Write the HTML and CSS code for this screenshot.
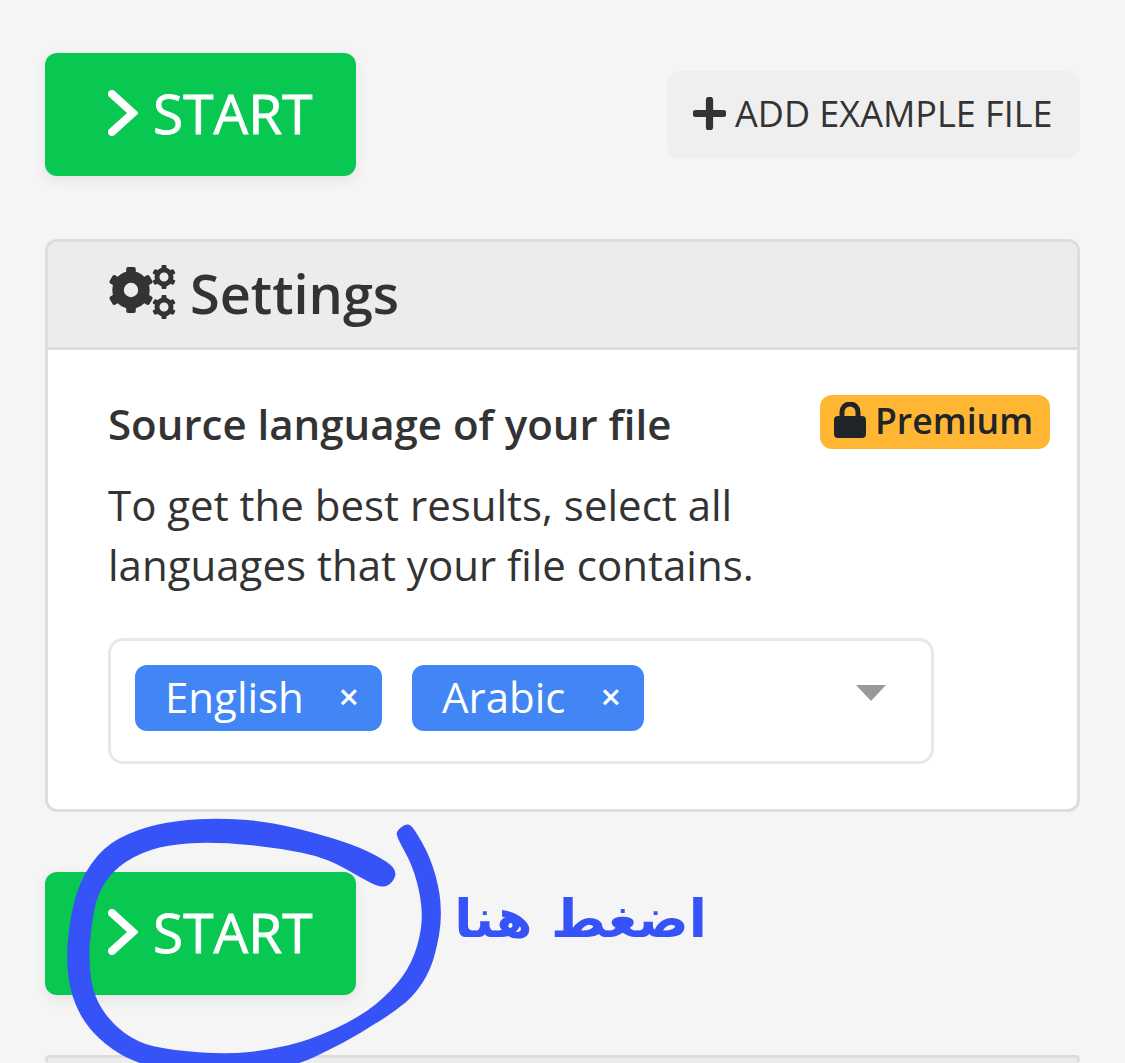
FILE: index.html
```html
<!DOCTYPE html>
<html lang="en">
<head>
    <meta charset="UTF-8">
    <meta name="viewport" content="width=device-width, initial-scale=1.0">
    <title>Start</title>
    <link rel="stylesheet" href="styles.css">
</head>
<body>

<svg class="defs" width="0" height="0">
    <symbol id="gear" viewBox="-24 -24 48 48">
        <circle r="13.5" fill="none" stroke="currentColor" stroke-width="12"/>
        <g fill="currentColor">
            <rect x="-5" y="-24" width="10" height="9" rx="2"/>
            <rect x="-5" y="-24" width="10" height="9" rx="2" transform="rotate(60)"/>
            <rect x="-5" y="-24" width="10" height="9" rx="2" transform="rotate(120)"/>
            <rect x="-5" y="-24" width="10" height="9" rx="2" transform="rotate(180)"/>
            <rect x="-5" y="-24" width="10" height="9" rx="2" transform="rotate(240)"/>
            <rect x="-5" y="-24" width="10" height="9" rx="2" transform="rotate(300)"/>
        </g>
    </symbol>
    <symbol id="gear-small" viewBox="-24 -24 48 48">
        <circle r="14" fill="none" stroke="currentColor" stroke-width="10"/>
        <g fill="currentColor">
            <rect x="-5" y="-24" width="10" height="9" rx="2"/>
            <rect x="-5" y="-24" width="10" height="9" rx="2" transform="rotate(60)"/>
            <rect x="-5" y="-24" width="10" height="9" rx="2" transform="rotate(120)"/>
            <rect x="-5" y="-24" width="10" height="9" rx="2" transform="rotate(180)"/>
            <rect x="-5" y="-24" width="10" height="9" rx="2" transform="rotate(240)"/>
            <rect x="-5" y="-24" width="10" height="9" rx="2" transform="rotate(300)"/>
        </g>
    </symbol>
    <symbol id="chevron" viewBox="0 0 30 46">
        <path d="M4 4 L25 23 L4 42" fill="none" stroke="currentColor" stroke-width="8" stroke-linecap="round" stroke-linejoin="miter"/>
    </symbol>
</svg>

<div class="page">
    <div class="top-row">
        <button class="btn-start">
            <svg class="chevron"><use href="#chevron"/></svg>
            <span>START</span>
        </button>
        <button class="btn-example">
            <svg class="plus" viewBox="0 0 32 32"><path d="M16 3 V29 M3 16 H29" fill="none" stroke="currentColor" stroke-width="7" stroke-linecap="round"/></svg>
            <span>ADD EXAMPLE FILE</span>
        </button>
    </div>

    <div class="card">
        <div class="card-header">
            <svg class="cogs" viewBox="0 0 68 54">
                <use href="#gear" x="0" y="2" width="46" height="46"/>
                <use href="#gear-small" x="44" y="0" width="24" height="24"/>
                <use href="#gear-small" x="44" y="30" width="24" height="24"/>
            </svg>
            <h2>Settings</h2>
        </div>
        <div class="card-body">
            <div class="label-row">
                <label>Source language of your file</label>
                <span class="badge">
                    <svg class="lock" viewBox="0 0 32 36">
                        <path d="M8 16 V10 A8 8 0 0 1 24 10 V16" fill="none" stroke="currentColor" stroke-width="5"/>
                        <rect x="0" y="14" width="32" height="22" rx="4" fill="currentColor"/>
                    </svg>
                    Premium
                </span>
            </div>
            <p class="hint">To get the best results, select all<br>languages that your file contains.</p>
            <div class="select-box">
                <span class="tag">English <span class="tag-x">×</span></span>
                <span class="tag tag-arabic">Arabic <span class="tag-x">×</span></span>
                <span class="caret"></span>
            </div>
        </div>
    </div>

    <div class="bottom-row">
        <button class="btn-start">
            <svg class="chevron"><use href="#chevron"/></svg>
            <span>START</span>
        </button>
    </div>

    <div class="card card-next"></div>
</div>

<!-- hand drawn note on top of the page -->
<svg class="scribble" viewBox="0 0 1125 1063">
    <path d="M402 827.5 Q407 824 410 826 Q413 828 421.5 843 Q430 858 435 876.5 Q440 895 440 910 Q441 930 433 958 Q425 984 405 1002 Q393 1012 376.5 1022 Q360 1033 343.5 1041.5 Q327 1050 313.5 1056.5 Q300 1063 275 1069 Q250 1075 215 1075 Q180 1075 160 1069 Q140 1063 126.5 1056.5 Q113 1050 100 1038 Q87 1026 79.5 1011 Q72 996 69.5 979.5 Q67 963 68.5 942.5 Q70 922 75 902 Q80 882 91.5 865 Q103 848 120 839 Q137 830 157 825.5 Q177 821 198.5 820 Q220 819 243.5 820.5 Q267 822 293.5 828.5 Q320 835 340 841.5 Q360 848 374 855.5 Q388 863 392 867.5 Q396 872 394 877 Q392 882 387.5 884.5 Q383 887 376.5 884.5 Q370 882 348.5 869.5 Q327 857 302 852 Q277 847 252 844.5 Q227 842 207 842 Q187 842 168.5 845 Q150 848 133.5 856.5 Q117 865 107 878.5 Q97 892 93.5 910 Q90 928 89 945.5 Q88 963 90.5 979.5 Q93 996 101.5 1009.5 Q110 1023 123.5 1033 Q137 1043 153.5 1047 Q170 1051 198.5 1053 Q227 1055 247 1053 Q267 1051 288.5 1046 Q310 1041 335 1029.5 Q360 1018 376.5 1004.5 Q393 991 403 977 Q413 963 418 945.5 Q423 928 422.5 913 Q422 898 417.5 881.5 Q413 865 405.5 851.5 Q398 838 397.5 834.5 Q397 831 402 827.5 Z"/>
</svg>
<div class="note" lang="ar" dir="rtl">اضغط هنا</div>

</body>
</html>
```

FILE: styles.css
```css
html, body {
    margin: 0;
    padding: 0;
    height: 1063px;
    overflow: hidden;
}

body {
    font-family: "Open Sans", sans-serif;
    background-color: #f5f5f5;
    color: #333;
    position: relative;
}

.defs {
    position: absolute;
}

.page {
    padding: 53px 45px 0;
}

.top-row {
    display: flex;
    justify-content: space-between;
    align-items: center;
}

button {
    font-family: inherit;
    border: none;
    display: flex;
    align-items: center;
}

.btn-start {
    width: 311px;
    height: 123px;
    padding: 0 0 4px 63px;
    gap: 15px;
    font-size: 55px;
    -webkit-text-stroke: 0.8px #fff;
    color: #fff;
    background-color: #09c852;
    border-radius: 12px;
    box-shadow: 0 4px 14px rgba(0, 0, 0, 0.08);
}

.chevron {
    width: 30px;
    height: 46px;
}

.btn-example {
    width: 413px;
    height: 87px;
    padding: 0 0 2px 26px;
    gap: 9px;
    font-size: 36px;
    color: #333;
    background-color: #efefef;
    border-radius: 12px;
}

.plus {
    width: 33px;
    height: 33px;
}

.card {
    margin-top: 63px;
    background-color: #fff;
    border: 3px solid #ddd;
    border-radius: 12px;
    overflow: hidden;
}

.card-header {
    display: flex;
    align-items: center;
    gap: 14px;
    height: 105px;
    padding-left: 60px;
    background-color: #ececec;
    border-bottom: 3px solid #ddd;
}

.card-header h2 {
    margin: 0;
    padding-bottom: 4px;
    font-size: 54px;
    font-weight: 600;
    color: #333;
}

.cogs {
    width: 68px;
    height: 54px;
    margin-bottom: 6px;
    color: #333;
}

.card-body {
    padding: 44px 27px 45px 60px;
}

.label-row {
    display: flex;
    justify-content: space-between;
    align-items: flex-start;
}

.label-row label {
    font-size: 42px;
    font-weight: 600;
    line-height: 60px;
}

.badge {
    display: flex;
    align-items: center;
    gap: 9px;
    width: 230px;
    height: 54px;
    margin-top: 1px;
    box-sizing: border-box;
    padding: 0 0 4px 14px;
    font-size: 35.6px;
    font-weight: 600;
    color: #212529;
    background-color: #ffb733;
    border-radius: 12px;
}

.lock {
    width: 32px;
    height: 36px;
}

.hint {
    margin: 21px 0 43px;
    font-size: 42px;
    line-height: 60px;
}

.select-box {
    position: relative;
    display: flex;
    gap: 30px;
    width: 826px;
    height: 126px;
    box-sizing: border-box;
    padding: 24px;
    border: 3px solid #e8e8e8;
    border-radius: 15px;
}

.tag {
    display: flex;
    justify-content: space-between;
    align-items: center;
    width: 247px;
    height: 66px;
    box-sizing: border-box;
    padding: 0 23px 4px 30px;
    font-size: 42px;
    color: #fff;
    background-color: #4285f4;
    border-radius: 12px;
}

.tag-arabic {
    width: 232px;
}

.tag-x {
    font-size: 36px;
    font-weight: 600;
}

/* dropdown arrow sits on top of the box */
.caret {
    position: absolute;
    top: 44px;
    right: 45px;
    border-top: 16px solid #999;
    border-left: 15px solid transparent;
    border-right: 15px solid transparent;
}

.bottom-row {
    margin-top: 60px;
}

.card-next {
    margin-top: 60px;
    height: 5px;
    border-bottom: none;
    background-color: #ececec;
}

.scribble {
    position: absolute;
    top: 0;
    left: 0;
    width: 1125px;
    height: 1063px;
    fill: #3653f8;
    stroke: #3653f8;
    stroke-width: 1.5;
    stroke-linejoin: round;
}

.note {
    position: absolute;
    left: 459px;
    top: 884px;
    width: 248px;
    font-family: "DejaVu Sans", sans-serif;
    font-size: 53px;
    font-weight: 700;
    line-height: 70px;
    white-space: nowrap;
    color: #3653f8;
}
```
